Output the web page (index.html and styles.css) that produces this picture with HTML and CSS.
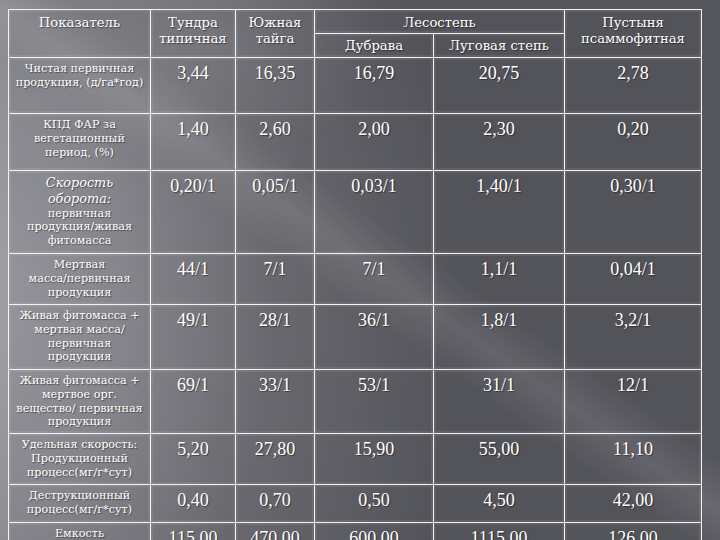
FILE: index.html
```html
<!DOCTYPE html>
<html lang="ru">
<head>
<meta charset="utf-8">
<link rel="stylesheet" href="styles.css">
</head>
<body>
<div class="slide">
<table class="grid">
<colgroup>
<col class="c0"><col class="c1"><col class="c2"><col class="c3"><col class="c4"><col class="c5">
</colgroup>
<thead>
<tr class="h1">
<th rowspan="2">Показатель</th>
<th rowspan="2">Тундра<br>типичная</th>
<th rowspan="2">Южная<br>тайга</th>
<th colspan="2" class="sub">Лесостепь</th>
<th rowspan="2">Пустыня<br>псаммофитная</th>
</tr>
<tr class="h2">
<th class="sub2">Дубрава</th>
<th class="sub2">Луговая степь</th>
</tr>
</thead>
<tbody>
<tr class="r1"><td class="lab">Чистая первичная<br>продукция, (д/га*год)</td><td>3,44</td><td>16,35</td><td>16,79</td><td>20,75</td><td>2,78</td></tr>
<tr class="r2"><td class="lab">КПД ФАР за<br>вегетационный<br>период, (%)</td><td>1,40</td><td>2,60</td><td>2,00</td><td>2,30</td><td>0,20</td></tr>
<tr class="r3"><td class="lab"><em>Скорость<br>оборота:</em><br>первичная<br>продукция/живая<br>фитомасса</td><td>0,20/1</td><td>0,05/1</td><td>0,03/1</td><td>1,40/1</td><td>0,30/1</td></tr>
<tr class="r4"><td class="lab">Мертвая<br>масса/первичная<br>продукция</td><td>44/1</td><td>7/1</td><td>7/1</td><td>1,1/1</td><td>0,04/1</td></tr>
<tr class="r5"><td class="lab">Живая фитомасса +<br>мертвая масса/<br>первичная<br>продукция</td><td>49/1</td><td>28/1</td><td>36/1</td><td>1,8/1</td><td>3,2/1</td></tr>
<tr class="r6"><td class="lab">Живая фитомасса +<br>мертвое орг.<br>вещество/ первичная<br>продукция</td><td>69/1</td><td>33/1</td><td>53/1</td><td>31/1</td><td>12/1</td></tr>
<tr class="r7"><td class="lab">Удельная скорость:<br>Продукционный<br>процесс(мг/г*сут)</td><td>5,20</td><td>27,80</td><td>15,90</td><td>55,00</td><td>11,10</td></tr>
<tr class="r8"><td class="lab">Деструкционный<br>процесс(мг/г*сут)</td><td>0,40</td><td>0,70</td><td>0,50</td><td>4,50</td><td>42,00</td></tr>
<tr class="r9"><td class="lab">Емкость<br>&nbsp;</td><td>115,00</td><td>470,00</td><td>600,00</td><td>1115,00</td><td>126,00</td></tr>
</tbody>
</table>
</div>
</body>
</html>
```
FILE: styles.css
```css
html, body {
  margin: 0;
  padding: 0;
  width: 720px;
  height: 540px;
  overflow: hidden;
}
body {
  background:
    linear-gradient(35deg, rgba(255,255,255,0) 46%, rgba(255,255,255,0.11) 51%, rgba(255,255,255,0) 56%),
    radial-gradient(ellipse 160px 120px at 220px 40px, rgba(255,255,255,0.10), rgba(255,255,255,0)),
    radial-gradient(ellipse 520px 700px at -60px 300px, #a6a6ac 0%, #8e8e94 35%, #6c6c72 65%, #55555c 100%),
    #515158;
  font-family: "Liberation Serif", "DejaVu Serif", serif;
  color: #ffffff;
}
.slide {
  padding: 9px 0 0 8px;
}
.grid {
  border-collapse: collapse;
  table-layout: fixed;
  width: 693px;
  text-shadow: 1px 1px 1px rgba(0,0,0,0.45);
}
.c0 { width: 142px; }
.c1 { width: 85px; }
.c2 { width: 79px; }
.c3 { width: 119px; }
.c4 { width: 131px; }
.c5 { width: 137px; }
.grid th, .grid td {
  border: 1.5px solid #f4f4f6;
  background: rgba(70,70,80,0.12);
  box-shadow: inset 0 0 0 2px rgba(255,255,255,0.08);
  vertical-align: top;
  text-align: center;
  padding: 0 1px;
}
.grid th {
  font-family: "DejaVu Serif", "Liberation Serif", serif;
  font-weight: normal;
  font-size: 13.2px;
  line-height: 16px;
  padding-top: 5px;
}
.h1 { height: 24px; }
.h2 { height: 24px; }
.grid th.sub { padding-top: 5px; }
.grid th.sub2 { padding-top: 4px; }
.grid td {
  font-size: 18px;
  line-height: 20px;
  padding-top: 5px;
}
.grid td.lab {
  font-family: "DejaVu Serif", "Liberation Serif", serif;
  font-size: 11.2px;
  line-height: 13.8px;
  padding-top: 4px;
}
.lab em {
  font-size: 12.8px;
  line-height: 15px;
}
.r1 { height: 56px; }
.r2 { height: 57px; }
.r3 { height: 83px; }
.r4 { height: 51px; }
.r5 { height: 65px; }
.r6 { height: 64px; }
.r7 { height: 51px; }
.r8 { height: 38px; }
.r9 { height: 40px; }
```
